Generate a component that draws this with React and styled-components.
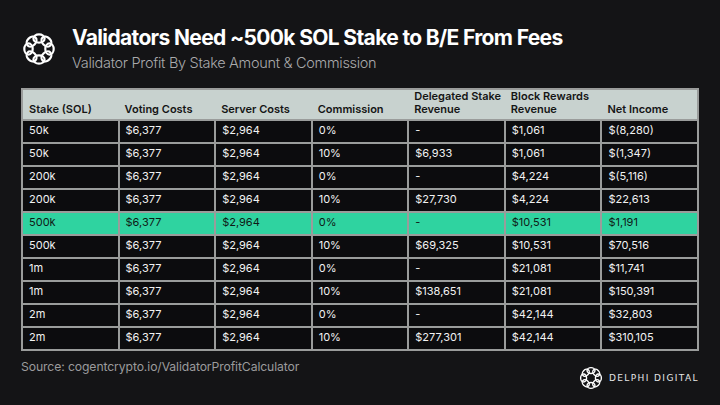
import React from 'react';
import styled, { createGlobalStyle } from 'styled-components';

const GlobalStyle = createGlobalStyle`
  html, body {
    margin: 0;
    padding: 0;
    background: #141416;
  }
  * { box-sizing: border-box; }
`;

const columns = [
  ['Stake (SOL)'],
  ['Voting Costs'],
  ['Server Costs'],
  ['Commission'],
  ['Delegated Stake', 'Revenue'],
  ['Block Rewards', 'Revenue'],
  ['Net Income'],
];

const rows = [
  ['50k', '$6,377', '$2,964', '0%', '-', '$1,061', '$(8,280)'],
  ['50k', '$6,377', '$2,964', '10%', '$6,933', '$1,061', '$(1,347)'],
  ['200k', '$6,377', '$2,964', '0%', '-', '$4,224', '$(5,116)'],
  ['200k', '$6,377', '$2,964', '10%', '$27,730', '$4,224', '$22,613'],
  ['500k', '$6,377', '$2,964', '0%', '-', '$10,531', '$1,191', true],
  ['500k', '$6,377', '$2,964', '10%', '$69,325', '$10,531', '$70,516'],
  ['1m', '$6,377', '$2,964', '0%', '-', '$21,081', '$11,741'],
  ['1m', '$6,377', '$2,964', '10%', '$138,651', '$21,081', '$150,391'],
  ['2m', '$6,377', '$2,964', '0%', '-', '$42,144', '$32,803'],
  ['2m', '$6,377', '$2,964', '10%', '$277,301', '$42,144', '$310,105'],
];

const RingLogo = ({ size = 34, stroke = 2.2 }) => {
  const loops = Array.from({ length: 8 }, (_, i) => (i * Math.PI * 2) / 8);
  return (
    <svg width={size} height={size} viewBox="0 0 34 34">
      {loops.map((a, i) => {
        const cx = 17 + Math.cos(a) * 10.5;
        const cy = 17 + Math.sin(a) * 10.5;
        return (
          <ellipse
            key={i}
            cx={cx}
            cy={cy}
            rx="5.6"
            ry="4.2"
            transform={`rotate(${(a * 180) / Math.PI + 90} ${cx} ${cy})`}
            fill="none"
            stroke="#fff"
            strokeWidth={stroke}
          />
        );
      })}
    </svg>
  );
};

const App = () => (
  <Page>
    <GlobalStyle />
    <Header>
      <RingLogo />
      <Titles>
        <Title>Validators Need ~500k SOL Stake to B/E From Fees</Title>
        <Subtitle>Validator Profit By Stake Amount &amp; Commission</Subtitle>
      </Titles>
    </Header>

    <Table>
      <thead>
        <tr>
          {columns.map(c => (
            <Th key={c.join(' ')}>
              {c.map((line, k) => (
                <HeadLine key={k}>{line}</HeadLine>
              ))}
            </Th>
          ))}
        </tr>
      </thead>
      <tbody>
        {rows.map((r, i) => (
          <Row key={i} $highlight={r[7]}>
            {r.slice(0, 7).map((v, j) => (
              <Td key={j}>{v}</Td>
            ))}
          </Row>
        ))}
      </tbody>
    </Table>

    <Footer>
      <Source>Source: cogentcrypto.io/ValidatorProfitCalculator</Source>
      <Brand>
        <RingLogo size={24} stroke={2} />
        <BrandName>DELPHI DIGITAL</BrandName>
      </Brand>
    </Footer>
  </Page>
);

const Page = styled.div`
  width: 720px;
  height: 405px;
  background: #141416;
  padding: 20px 21px 0 21px;
  font-family: Inter, 'Noto Sans', sans-serif;
  color: #fff;
  overflow: hidden;
`;

const Header = styled.div`
  display: flex;
  align-items: center;
  gap: 16px;
  padding-left: 1px;
  height: 58px;
`;

const Titles = styled.div`
  display: flex;
  flex-direction: column;
  gap: 2px;
`;

const Title = styled.h1`
  margin: 0;
  font-size: 21px;
  font-weight: 700;
  letter-spacing: -0.65px;
  line-height: 26px;
  color: #fff;
`;

const Subtitle = styled.p`
  margin: 0;
  font-size: 14.5px;
  font-weight: 300;
  letter-spacing: -0.3px;
  line-height: 20px;
  color: #a9aaac;
`;

const Table = styled.table`
  width: 678px;
  margin-top: 10px;
  border-collapse: collapse;
  table-layout: fixed;
  background: #0c0c0e;
  border: 2px solid #9a9c9b;
`;

const Th = styled.th`
  height: 30px;
  background: #c8d2cf;
  color: #151515;
  font-size: 11px;
  font-weight: 600;
  text-align: left;
  vertical-align: bottom;
  padding: 0 6px 3px;
  line-height: 13px;
`;

const HeadLine = styled.div`
  white-space: nowrap;
`;

const Row = styled.tr`
  background: ${p => (p.$highlight ? '#2fd3a0' : '#0c0c0e')};
  color: ${p => (p.$highlight ? '#0f1a16' : '#f2f2f2')};
`;

const Td = styled.td`
  height: 23px;
  border: 2px solid #9a9c9b;
  font-size: 11px;
  font-weight: 400;
  padding: 0 6px 4px;
  vertical-align: middle;
  line-height: 14px;
`;

const Footer = styled.div`
  display: flex;
  justify-content: space-between;
  align-items: flex-start;
  margin-top: 8px;
`;

const Source = styled.div`
  font-size: 12.2px;
  color: #9b9b9d;
  letter-spacing: -0.1px;
`;

const Brand = styled.div`
  display: flex;
  align-items: center;
  gap: 6px;
  margin-top: 7px;
`;

const BrandName = styled.span`
  font-family: 'DejaVu Sans', sans-serif;
  font-size: 9px;
  font-weight: 400;
  letter-spacing: 1.4px;
  color: #e6e6e6;
`;

export default App;
